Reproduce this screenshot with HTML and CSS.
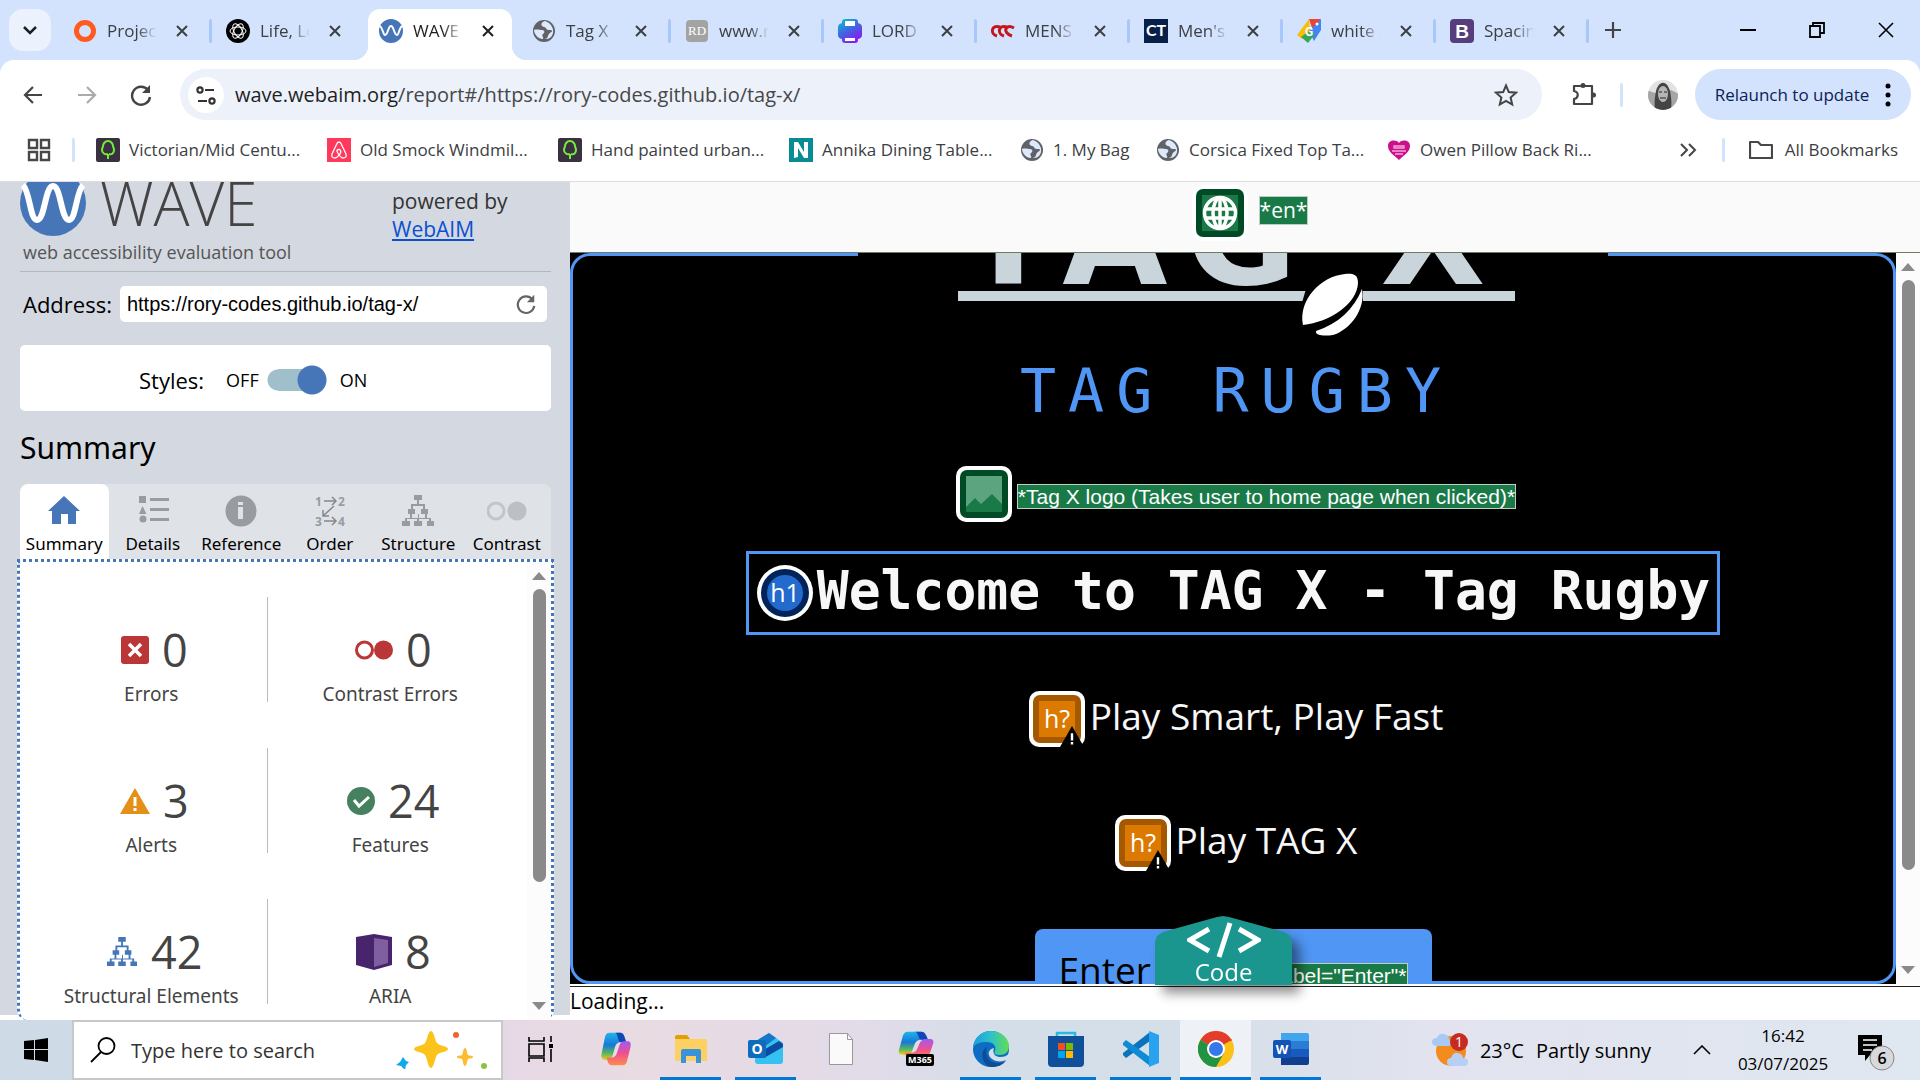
FILE: index.html
```
<!DOCTYPE html>
<html lang="en">
<head>
<meta charset="utf-8">
<title>WAVE Report</title>
<link rel="stylesheet" href="styles.css">
</head>
<body>
<svg class="defs" aria-hidden="true">
  <symbol id="close" viewBox="0 0 14 14"><path d="M2 2l10 10M12 2L2 12" stroke="currentColor" stroke-width="2" fill="none"/></symbol>
  <symbol id="globe" viewBox="0 0 24 24"><circle cx="12" cy="12" r="11" fill="#5f6368"/><path d="M2 11c3-1 6 0 8 0 3 0 3 3 1 4s1 3 0 5c-5 0-9-5-9-9zM13 2c-4 1-5 5-1 6 3 0 1 3 5 3s4 1 1 3-1 5-5 6c7 1 10-7 7-12-1-3-4-5-7-6z" fill="#dfe9fc"/></symbol>
  <symbol id="gumtree" viewBox="0 0 24 24"><rect width="24" height="24" rx="2" fill="#3b3040"/><path d="M12 21v-5M12 16c-3 1-6-1-6-4 0-2 1-3 1-4 0-2 2-5 5-5s5 3 5 5c0 1 1 2 1 4 0 3-2 5-5 4" fill="none" stroke="#6fee3b" stroke-width="2"/></symbol>
  <symbol id="tree" viewBox="0 0 32 32"><path d="M12 0h8v5h-3v4h6v5h3v5h-7v-5h2v-3H11v3h2v5H6v-5h3V9h6V5h-3zM8 19h2v4h6v-4h1v4h6v-4h2v4h4v3h3v5h-7v-5h2v-2H17v2h3v5h-8v-5h3v-2H5v2h3v5H0v-5h3v-3h5z"/></symbol>
  <symbol id="reload" viewBox="0 0 24 24"><path d="M19 7a9 9 0 1 0 2 7" fill="none" stroke="currentColor" stroke-width="2.4"/><path d="M21 2v8h-8z" fill="currentColor"/></symbol>
  <symbol id="warn" viewBox="0 0 30 26"><path d="M15 0l15 26H0z"/><path d="M15 9v9M15 20v3" stroke="#fff" stroke-width="3"/></symbol>
  <symbol id="copilot" viewBox="0 0 36 40"><path d="M10 1h13c3 0 4 2 5 5l2 6h-7c-3 0-5 2-6 5l-3 11c-1 3-3 5-6 5H5c-3 0-5-3-4-7L5 6c1-3 2-5 5-5z" fill="url(#cpa)"/><path d="M17 1h6c3 0 4 2 5 5l2 6h-6c-3 0-3-3-4-6-1-4-2-5-3-5z" fill="#1246b8"/><path d="M26 39H13c-3 0-4-2-5-5l-1-4h6c3 0 5-2 6-5l3-9c1-3 3-5 6-5h4c3 0 4 3 3 7l-4 16c-1 3-2 5-5 5z" fill="url(#cpb)"/></symbol>
  <linearGradient id="cpa" x2="0" y2="1"><stop stop-color="#20b5e8"/><stop offset=".45" stop-color="#1678d8"/><stop offset=".75" stop-color="#56b75d"/><stop offset="1" stop-color="#f7cc1d"/></linearGradient>
  <linearGradient id="cpb" x2="0" y2="1"><stop stop-color="#a259f0"/><stop offset=".5" stop-color="#ee4f91"/><stop offset="1" stop-color="#ff8b49"/></linearGradient>
</svg>

<header class="browser">
  <div class="tabstrip">
    <button class="tab-search" aria-label="Search tabs"><svg width="14" height="10" viewBox="0 0 14 10"><path d="M1 2l6 6 6-6" fill="none" stroke="#1f1f1f" stroke-width="2.5"/></svg></button>
    <ul class="tabs">
      <li><div class="tab"><svg viewBox="0 0 24 24"><circle cx="12" cy="12" r="8.5" fill="none" stroke="#ff5a1f" stroke-width="5"/></svg><span>Project</span><button aria-label="Close"><svg><use href="#close"/></svg></button></div></li>
      <li class="nosep"><div class="tab"><svg viewBox="0 0 24 24"><circle cx="12" cy="12" r="12"/><g fill="none" stroke="#fff" stroke-width="1"><ellipse cx="12" cy="12" rx="8" ry="4"/><ellipse cx="12" cy="12" rx="8" ry="4" transform="rotate(60 12 12)"/><ellipse cx="12" cy="12" rx="8" ry="4" transform="rotate(120 12 12)"/></g></svg><span>Life, Lo</span><button aria-label="Close"><svg><use href="#close"/></svg></button></div></li>
      <li class="nosep active"><div class="tab"><svg viewBox="0 0 24 24"><circle cx="12" cy="12" r="12" fill="#4776b8"/><path d="M1 7c3 2 3 9 5 9 3 0 3-9 6-9s3 9 6 9c2 0 2-7 5-9" fill="none" stroke="#fff" stroke-width="2"/></svg><span>WAVE R</span><button aria-label="Close"><svg><use href="#close"/></svg></button></div></li>
      <li><div class="tab"><svg><use href="#globe"/></svg><span>Tag X</span><button aria-label="Close"><svg><use href="#close"/></svg></button></div></li>
      <li><div class="tab"><svg viewBox="0 0 24 24"><rect x="1" y="1" width="22" height="22" rx="4" fill="#a3a3a3"/><text x="12" y="16" text-anchor="middle" font-family="Liberation Serif" font-size="13" fill="#fff">RD</text></svg><span>www.rd</span><button aria-label="Close"><svg><use href="#close"/></svg></button></div></li>
      <li><div class="tab"><svg viewBox="0 0 24 24"><linearGradient id="lg" x2=".6" y2="1"><stop stop-color="#05ccd0"/><stop offset=".5" stop-color="#3b6be0"/><stop offset="1" stop-color="#8a1bf0"/></linearGradient><path d="M7 0h10q3 0 3 3v1q4 1 4 4v8q0 3-4 4v1q0 3-3 3H7q-3 0-3-3v-1q-4-1-4-4V8q0-3 4-4V3q0-3 3-3z" fill="url(#lg)"/><path d="M7 2h10v5H7zM7 19h10v3H7z" fill="#fff"/></svg><span>LORD C</span><button aria-label="Close"><svg><use href="#close"/></svg></button></div></li>
      <li><div class="tab"><svg viewBox="0 0 24 24"><g fill="none" stroke="#c3171c" stroke-width="3"><path d="M9 8c-9-3-10 7-3 9M16 8c-9-3-10 7-3 9M23 9c-9-5-12 5-2 8"/></g></svg><span>MENS R</span><button aria-label="Close"><svg><use href="#close"/></svg></button></div></li>
      <li><div class="tab"><svg viewBox="0 0 24 24"><rect width="24" height="24" fill="#081f49"/><text x="12" y="17" text-anchor="middle" font-family="Lato" font-weight="700" font-size="16" fill="#fff">CT</text></svg><span>Men's T</span><button aria-label="Close"><svg><use href="#close"/></svg></button></div></li>
      <li><div class="tab"><svg viewBox="0 0 24 24"><path d="M12 0h12l-8 12z" fill="#ea4335"/><path d="M24 0v11l-7 11-5-10z" fill="#4285f4"/><path d="M12 0L0 16l5 4 8-9z" fill="#fbbc04"/><path d="M4 18l7 6 7-9-6-3z" fill="#34a853"/><circle cx="20" cy="5" r="1.5" fill="#fff"/><text x="12" y="17" text-anchor="middle" font-family="Roboto" font-weight="700" font-size="12" fill="#fff">G</text></svg><span>white p</span><button aria-label="Close"><svg><use href="#close"/></svg></button></div></li>
      <li><div class="tab"><svg viewBox="0 0 24 24"><rect width="24" height="24" rx="4" fill="#563d7c"/><text x="12" y="19" text-anchor="middle" font-family="Liberation Sans" font-weight="700" font-size="19" fill="#fff">B</text></svg><span>Spacing</span><button aria-label="Close"><svg><use href="#close"/></svg></button></div></li>
    </ul>
    <button class="new-tab" aria-label="New tab"><svg width="16" height="16" viewBox="0 0 16 16"><path d="M8 0v16M0 8h16" stroke="#444" stroke-width="2.2"/></svg></button>
    <div class="winbtns">
      <button aria-label="Minimise"><svg viewBox="0 0 16 16"><path d="M0 8h16" stroke="#000" stroke-width="2"/></svg></button>
      <button aria-label="Restore"><svg viewBox="0 0 16 16"><path d="M1 4h10v11H1zM4 4V1h11v10h-4" fill="none" stroke="#000" stroke-width="1.8"/></svg></button>
      <button aria-label="Close window"><svg viewBox="0 0 16 16"><path d="M1 1l14 14M15 1L1 15" stroke="#000" stroke-width="1.6"/></svg></button>
    </div>
  </div>

  <div class="toolbar">
    <button aria-label="Back"><svg viewBox="0 0 24 24"><path d="M21 12H4M12 4l-8 8 8 8" fill="none" stroke="#444" stroke-width="2.2"/></svg></button>
    <button aria-label="Forward"><svg viewBox="0 0 24 24"><path d="M3 12h17M12 4l8 8-8 8" fill="none" stroke="#a9abae" stroke-width="2.2"/></svg></button>
    <button class="ink" aria-label="Reload"><svg><use href="#reload"/></svg></button>
    <div class="omnibox">
      <button class="site" aria-label="Site information"><svg viewBox="0 0 24 24"><g fill="none" stroke="#333" stroke-width="2.2"><circle cx="6" cy="7" r="2.6"/><path d="M11 7h9M4 18h9"/><circle cx="18" cy="18" r="2.6"/></g></svg></button>
      <span class="url"><b>wave.webaim.org</b>/report#/https://rory-codes.github.io/tag-x/</span>
      <button aria-label="Bookmark"><svg viewBox="0 0 24 24"><path d="M12 2.500l2.800 6.600 7.200.6-5.400 4.800 1.600 7-6.200-3.700-6.200 3.700 1.600-7L2 9.700l7.200-.6z" fill="none" stroke="#444" stroke-width="2"/></svg></button>
    </div>
    <button class="ext" aria-label="Extensions"><svg viewBox="0 0 24 24"><path d="M2 3h18v18H2v-5c5-1 5-7 0-8z" fill="none" stroke="#444" stroke-width="2.200" stroke-linejoin="round"/><circle cx="11" cy="2.500" r="2.500" fill="#444"/><circle cx="21.500" cy="12" r="2.500" fill="#444"/></svg></button>
    <i class="sep"></i>
    <svg class="avatar" viewBox="0 0 32 32"><clipPath id="av"><circle cx="16" cy="16" r="15"/></clipPath><g clip-path="url(#av)"><path d="M0 0h32v32H0z" fill="#e2e2e2"/><path d="M0 11l8 3 16-3 8 4v17H0z" fill="#a5a5a5"/><path d="M8 30c-1-8 0-12 1-18 3-11 11-11 14 0 1 6 2 10 1 18l-8 3z" fill="#444"/><ellipse cx="16" cy="15" rx="5" ry="8" fill="#b5b5b5"/><path d="M12 13h3m2 0h3M13 19h6" stroke="#555" stroke-width="1.500"/></g></svg>
    <button class="relaunch">Relaunch to update <svg width="6" height="24" viewBox="0 0 6 24"><circle cx="3" cy="3" r="2.500"/><circle cx="3" cy="12" r="2.500"/><circle cx="3" cy="21" r="2.500"/></svg></button>
  </div>

  <nav class="bookmarks">
    <button class="apps" aria-label="Apps"><svg viewBox="0 0 24 24"><path d="M2 2h8v8H2zM14 2h8v8h-8zM2 14h8v8H2zM14 14h8v8h-8z" fill="none" stroke="#474747" stroke-width="2.400"/></svg></button>
    <i class="sep"></i>
    <a href="#"><svg><use href="#gumtree"/></svg><span class="long">Victorian/Mid Centu...</span></a>
    <a href="#"><svg viewBox="0 0 24 24"><path d="M0 0h24v24H0z" fill="#ff385c"/><path d="M12 4c1 0 2 1 2.500 2.500l4.500 9.500c1 3-1 4-3 4s-4-3-5.500-5.500C9 12 12 10 13.500 12.500 15 15 10 20 8 20s-4-1-3-4l4.500-9.500C10 5 11 4 12 4z" fill="none" stroke="#fff" stroke-width="1.300"/></svg><span class="long">Old Smock Windmil...</span></a>
    <a href="#"><svg><use href="#gumtree"/></svg><span class="long">Hand painted urban...</span></a>
    <a href="#"><svg viewBox="0 0 24 24"><path d="M0 0h24v24H0z" fill="#068c92"/><path d="M5 4h4l6 10V4h4v16h-4L9 10v9l-4 1z" fill="#fff"/></svg><span class="long">Annika Dining Table...</span></a>
    <a href="#"><svg><use href="#globe"/></svg><span class="short">1. My Bag</span></a>
    <a href="#"><svg><use href="#globe"/></svg><span class="long">Corsica Fixed Top Ta...</span></a>
    <a href="#"><svg viewBox="0 0 24 24"><path d="M12 22C7 17 1 14 1 8c0-6 8-7 11-3 3-4 11-3 11 3 0 6-6 9-11 14z" fill="#c9118b"/><path d="M7 8h10v2H7zM5 13h14M8 16h8" fill="none" stroke="#f3a8da" stroke-width="1.300"/></svg><span class="long">Owen Pillow Back Ri...</span></a>
    <button class="more" aria-label="More bookmarks"><svg viewBox="0 0 24 24"><path d="M5 6l6 6-6 6M13 6l6 6-6 6" fill="none" stroke="#444" stroke-width="2"/></svg></button>
    <i class="sep"></i>
    <a class="all" href="#"><svg viewBox="0 0 24 24"><path d="M1 20V4h8l3 3h11v13z" fill="none" stroke="#474747" stroke-width="2.200" stroke-linejoin="round"/></svg><span>All Bookmarks</span></a>
  </nav>
</header>

<main>
  <aside>
    <div class="brand">
      <div class="wordmark"><svg width="66" height="54" viewBox="0 13 66 54"><circle cx="33" cy="34" r="33" fill="#4776b8"/><path d="M3 16c7 7 7 35 14 35 8 0 8-34 16-34s8 34 16 34c7 0 7-28 14-35" fill="none" stroke="#fff" stroke-width="6"/></svg><span>WAVE</span></div>
      <p class="powered">powered by<br><a href="#">WebAIM</a></p>
      <p class="tagline">web accessibility evaluation tool</p>
    </div>
    <form class="address"><label for="addr">Address:</label><div class="field"><input id="addr" type="text" value="https://rory-codes.github.io/tag-x/"><button type="button" aria-label="Reload report"><svg><use href="#reload"/></svg></button></div></form>
    <div class="styles"><span class="cap">Styles:</span><label for="sw">OFF</label><input id="sw" type="checkbox" checked><label for="sw">ON</label></div>
    <h2>Summary</h2>
    <div class="views">
      <button class="on"><svg viewBox="0 0 32 32"><path d="M16 1l16 15h-4v13h-8V19h-7v10H4V16H0z" fill="#4776b8"/></svg>Summary</button>
      <button><svg viewBox="0 0 32 32"><path d="M2 1h7v7H2zM5.500 11l4 8H2zM13 3h19v3H13zM13 13h19v3H13zM13 23h19v3H13z"/><circle cx="6" cy="24" r="3.500"/></svg>Details</button>
      <button><svg viewBox="0 0 32 32"><circle cx="16" cy="16" r="15.500"/><path d="M13 12h5v12h-5zM13 7h5v3h-5z" fill="#dfe2e7"/></svg>Reference</button>
      <button><svg viewBox="0 0 32 32" class="order"><text x="1" y="11">1</text><text x="24" y="11">2</text><text x="1" y="31">3</text><text x="24" y="31">4</text><path d="M10 6h12M18 2l4 4-4 4M20 11L9 21M9 15v6h6M10 26h12M18 22l4 4-4 4" fill="none" stroke="#85898e" stroke-width="1.500"/></svg>Order</button>
      <button><svg><use href="#tree"/></svg>Structure</button>
      <button><svg viewBox="0 0 40 32" class="wide"><circle cx="9" cy="16" r="8" fill="none" stroke="#c2c6cb" stroke-width="3"/><circle cx="30" cy="16" r="9.500" fill="#bcc0c4"/></svg>Contrast</button>
    </div>
    <section class="panel">
      <div class="stats">
        <div class="stat"><p><svg viewBox="0 0 28 28" width="28"><rect width="28" height="28" rx="3" fill="#bb3636"/><path d="M8 8l12 12M20 8L8 20" stroke="#fff" stroke-width="3.500"/></svg>0</p><span>Errors</span></div>
        <div class="stat"><p><svg viewBox="0 0 38 28" width="38"><circle cx="9.500" cy="14" r="8" fill="none" stroke="#bb3636" stroke-width="3"/><circle cx="28.500" cy="14" r="9.500" fill="#bb3636"/></svg>0</p><span>Contrast Errors</span></div>
        <div class="stat"><p><svg width="30" fill="#e48f17"><use href="#warn"/></svg>3</p><span>Alerts</span></div>
        <div class="stat"><p><svg viewBox="0 0 28 28" width="28"><circle cx="14" cy="14" r="14" fill="#46815f"/><path d="M7 13l5 6 10-9" fill="none" stroke="#fff" stroke-width="3"/></svg>24</p><span>Features</span></div>
        <div class="stat"><p><svg width="32" fill="#4776b8"><use href="#tree"/></svg>42</p><span>Structural Elements</span></div>
        <div class="stat"><p><svg class="cube" viewBox="0 0 36 36" width="36"><path d="M0 3l18-3 18 3v28l-18 5-18-5z" fill="#48246d"/><path d="M18 4l14 2v23l-14 4z" fill="#805fa0"/></svg>8</p><span>ARIA</span></div>
      </div>
      <div class="scroll"><i class="up"></i><i class="thumb"></i><i class="down"></i></div>
    </section>
  </aside>

  <section class="report">
    <div class="langbar"><svg class="wicon" viewBox="0 0 56 56"><rect width="56" height="56" rx="12" fill="#fff"/><rect x="4" y="4" width="48" height="48" rx="7" fill="#004b25"/><path d="M10 10h36v36H10z" fill="#1a7a47"/><g fill="none" stroke="#fff" stroke-width="3.500"><circle cx="28" cy="28" r="15.500"/><ellipse cx="28" cy="28" rx="7" ry="15"/><path d="M28 12v32M13 24h30M13 33h30"/></g></svg><span class="tag lang">*en*</span></div>
    <div class="viewport">
      <div class="page">
        <svg class="logo" width="750" height="167" viewBox="0 0 750 167" role="img" aria-label="Tag X logo">
          <text class="mark" x="104" y="31">TAG X</text>
          <path d="M100 38h557v10H100z" fill="#cad4db"/>
          <path d="M448 36h57v17h-62z"/>
          <path d="M445 72c-5-25 18-49 42-51 9-1 13 1 13 9-1 21-28 39-55 42z" fill="#fff"/>
          <path d="M458 78c22-7 38-22 46-42 4 20-12 41-29 46-8 1-18 1-17-4z" fill="#fff"/>
          <text class="sub" x="162" y="159">TAG RUGBY</text>
        </svg>
        <div class="row alt"><svg class="wicon" viewBox="0 0 56 56"><rect width="56" height="56" rx="10" fill="#fff"/><rect x="4" y="4" width="48" height="48" rx="7" fill="#004b25"/><path d="M10 10h36v36H10z" fill="#5ca37f"/><path d="M10 41l9-9 6 6 11-10 10 10v8H10z" fill="#1a7a47"/></svg><span class="tag">*Tag X logo (Takes user to home page when clicked)*</span></div>
        <h1><svg class="wicon" viewBox="0 0 56 56"><circle cx="28" cy="28" r="28" fill="#fff"/><circle cx="28" cy="28" r="24" fill="#00235c"/><circle cx="28" cy="28" r="18" fill="#226acb"/><text x="28" y="37" text-anchor="middle">h1</text></svg><span>Welcome to TAG X - Tag Rugby</span></h1>
        <p class="row play"><svg class="wicon" viewBox="0 0 56 56"><rect width="56" height="56" rx="10" fill="#fff"/><rect x="4" y="4" width="48" height="48" rx="7" fill="#a55800"/><path d="M10 10h36v36H10z" fill="#dc7900"/><text x="28" y="37" text-anchor="middle">h?</text><svg x="31" y="35" width="24" height="21"><use href="#warn"/></svg></svg><span>Play Smart, Play Fast</span></p>
        <p class="row play"><svg class="wicon" viewBox="0 0 56 56"><rect width="56" height="56" rx="10" fill="#fff"/><rect x="4" y="4" width="48" height="48" rx="7" fill="#a55800"/><path d="M10 10h36v36H10z" fill="#dc7900"/><text x="28" y="37" text-anchor="middle">h?</text><svg x="31" y="35" width="24" height="21"><use href="#warn"/></svg></svg><span>Play TAG X</span></p>
        <button class="enter"><span>Enter</span><span class="tag">label="Enter"*</span></button>
      </div>
      <div class="scroll"><i class="up"></i><i class="thumb"></i><i class="down"></i></div>
    </div>
    <p class="loading">Loading...</p>
    <button class="code"><svg width="74" height="36" viewBox="0 0 74 36"><path d="M22 7L3 18l19 11M43 1L32 35M52 7l19 11-19 11" fill="none" stroke="#fff" stroke-width="5"/></svg><span>Code</span></button>
  </section>
</main>

<footer class="taskbar">
  <button class="start" aria-label="Start"><svg width="24" height="24" viewBox="0 0 24 24"><path d="M0 3l10-1v9H0zM11 2l13-2v11H11zM0 12h10v10l-10-1zM11 12h13v12l-13-2z"/></svg></button>
  <label class="search"><svg width="26" height="26" viewBox="0 0 26 26"><circle cx="16.500" cy="9" r="8" fill="none" stroke="#000" stroke-width="1.800"/><path d="M11 15L1 25" stroke="#000" stroke-width="1.800"/></svg><input type="text" placeholder="Type here to search" aria-label="Search">
    <svg width="92" height="38" viewBox="0 0 92 38"><path d="M35 0c3 0 4 10 6 12 2 3 11 3 11 6s-9 3-11 6c-2 2-3 13-6 13s-4-11-6-13c-2-3-11-3-11-6s9-3 11-6c2-2 3-12 6-12z" fill="#fbc31c"/><path d="M69 17c2 0 2 6 3 7s5 0 5 2-4 1-5 2-1 7-3 7-2-6-3-7-5 0-5-2 4-1 5-2 1-7 3-7z" fill="#fdbb30"/><path d="M7 26l3 4 3 1-3 3-1 5-4-4-5-1 4-3z" fill="#12a9ec"/><circle cx="60" cy="4" r="3" fill="#f2642b"/><circle cx="88" cy="35" r="3" fill="#86c440"/></svg></label>
  <div class="apps-row">
    <button aria-label="Task view"><svg width="26" height="26" viewBox="0 0 26 26"><path d="M1 1v4h15V1M1 8h15v12H1zM1 26v-4h15v4M23 0v6M23 13v13" fill="none" stroke="#000" stroke-width="1.600"/><path d="M21 8h4v4h-4z"/></svg></button>
    <button aria-label="Copilot"><svg width="36" height="34"><use href="#copilot"/></svg></button>
    <button class="run" aria-label="File Explorer"><svg width="34" height="28" viewBox="0 0 34 28"><path d="M1 8V2q0-2 2-2h10l3 4H1z" fill="#dfa000"/><path d="M1 4h30q2 0 2 2v20H1z" fill="#fdd063"/><path d="M7 28V16q0-2 2-2h16q2 0 2 2v12h-5v-7H12v7z" fill="#3a93d8"/></svg></button>
    <button class="run" aria-label="Outlook"><svg width="36" height="32" viewBox="0 0 36 32"><path d="M8 8l13-8 14 10v18q0 3-3 3H10q-3 0-3-3z" fill="#35c1f1"/><path d="M14 18L31 8l4 3v3L16 25z" fill="#0b4ba0"/><path d="M8 8l13-8 7 5-16 12z" fill="#1677c9"/><rect y="7" width="18" height="18" rx="2" fill="#0f6cbd"/><text x="9" y="21" text-anchor="middle" font-family="Open Sans" font-size="14" font-weight="700" fill="#fff">O</text></svg></button>
    <button aria-label="File"><svg width="24" height="32" viewBox="0 0 24 32"><path d="M.5.500h18l5 6v25H.5z" fill="#fafafa" stroke="#999"/><path d="M18.500.500v6h5" fill="none" stroke="#999"/></svg></button>
    <button aria-label="Microsoft 365"><svg width="36" height="36" viewBox="0 0 36 36"><svg width="36" height="29" preserveAspectRatio="none" viewBox="0 0 36 40"><use href="#copilot" width="36" height="40"/></svg><rect x="8" y="23" width="28" height="12" rx="2"/><text x="22" y="32" text-anchor="middle" font-family="Open Sans" font-size="9" font-weight="700" fill="#fff">M365</text></svg></button>
    <button class="run" aria-label="Edge"><svg width="36" height="36" viewBox="0 0 36 36"><linearGradient id="ed"><stop stop-color="#1a9de0"/><stop offset=".5" stop-color="#2dc2c8"/><stop offset="1" stop-color="#64dc50"/></linearGradient><circle cx="18" cy="18" r="18" fill="#0d6cc4"/><path d="M0 17C1 6 9 0 18 0c11 0 18 8 18 15 0 6-4 9-9 9-4 0-7-1-5-4 2-5-2-9-8-9C8 11 2 12 0 17z" fill="url(#ed)"/><path d="M14 16c-3 9 3 17 12 16 4 0 6-2 8-4-4 7-10 8-16 8C9 34 6 20 14 16z" fill="#104c94"/><path d="M21 17c-2 5 1 9 6 9 4 0 7-1 9-4v7l-3 0c-6 3-15 1-17-5-1-3 1-6 5-7z" fill="#d6e0e9"/></svg></button>
    <button class="run" aria-label="Store"><svg width="36" height="36" viewBox="0 0 36 36"><path d="M9 8V2h18v6" fill="none" stroke="#29b7ea" stroke-width="2.500"/><path d="M0 5h36v27q0 4-4 4H4q-4 0-4-4z" fill="#10509b"/><path d="M10 12h7v7h-7z" fill="#f25022"/><path d="M18 12h7v7h-7z" fill="#7fba00"/><path d="M10 20h7v7h-7z" fill="#00a4ef"/><path d="M18 20h7v7h-7z" fill="#ffb900"/></svg></button>
    <button class="run" aria-label="VS Code"><svg width="36" height="36" viewBox="0 0 36 36"><path d="M27 1v9L3 27l-3-3v-2z" fill="#0a73bb"/><path d="M27 35v-9L3 9 0 12v2z" fill="#0f8ad5"/><path d="M26 0l10 4v28l-10 4z" fill="#29a3ef"/></svg></button>
    <button class="run current" aria-label="Chrome"><svg width="36" height="36" viewBox="0 0 36 36"><circle cx="18" cy="18" r="18" fill="#fbc116"/><path d="M18 18L2.400 9A18 18 0 0 1 33.600 9z" fill="#e33b2e"/><path d="M2.400 9A18 18 0 0 0 18 36l8-14-8-4z" fill="#229342"/><path d="M18 9h15.600z" stroke="#e33b2e"/><circle cx="18" cy="18" r="9" fill="#fff"/><circle cx="18" cy="18" r="7" fill="#3478ea"/></svg></button>
    <button class="run" aria-label="Word"><svg width="36" height="32" viewBox="0 0 36 32"><path d="M8 0h26q2 0 2 2v6H8z" fill="#41a5ee"/><path d="M8 8h28v8H8z" fill="#2b7cd3"/><path d="M8 16h28v8H8z" fill="#185abd"/><path d="M8 24h28v6q0 2-2 2H8z" fill="#103f91"/><rect y="7" width="18" height="18" rx="2" fill="#1552b5"/><text x="9" y="21" text-anchor="middle" font-family="Open Sans" font-size="13" font-weight="700" fill="#fff">W</text></svg></button>
  </div>
  <div class="tray">
    <button class="weather"><svg width="38" height="34" viewBox="0 0 38 34"><circle cx="19" cy="18" r="15" fill="#f28c1c"/><path d="M5 13q-5 0-5-4t5-4q2-5 7-4t5 5q4 1 3 4t-3 3z" fill="#a9c8f3"/><path d="M19 33q-4 0-4-4t4-4q2-6 7-5t5 5q5 0 5 4t-4 4z" fill="#b5cff5"/><circle cx="27" cy="9" r="9" fill="#c62b1f"/><text x="27" y="14" text-anchor="middle" font-family="Open Sans" font-size="14" fill="#fff">1</text></svg><span>23°C</span><span>Partly sunny</span></button>
    <button class="chev" aria-label="Show hidden icons"><svg width="18" height="10" viewBox="0 0 18 10"><path d="M1 9l8-8 8 8" fill="none" stroke="#000" stroke-width="1.600"/></svg></button>
    <div class="clock"><time>16:42</time><time>03/07/2025</time></div>
    <button class="notif" aria-label="Notifications"><svg width="38" height="38" viewBox="0 0 38 38"><path d="M0 1h24v20H12l-5 6v-6H0z"/><path d="M5 6h14M5 11h14M5 16h9" stroke="#fff" stroke-width="1.500"/><circle cx="24" cy="24" r="12" fill="#d8d9dc" stroke="#888"/><text x="24" y="30" text-anchor="middle" font-family="Open Sans" font-size="16" font-weight="600">6</text></svg></button>
  </div>
</footer>
</body>
</html>
```
FILE: styles.css
```
* { box-sizing: border-box; margin: 0; padding: 0; }
body { display: flex; flex-direction: column; height: 100vh; overflow: hidden; background: #fff; color: #000; font-family: "Open Sans", sans-serif; font-size: 17px; }
button { border: 0; background: none; font: inherit; color: inherit; display: flex; align-items: center; justify-content: center; }
a { color: inherit; text-decoration: none; }
ul { list-style: none; }
svg { flex: none; display: block; }
.defs { position: absolute; width: 0; height: 0; }

/* Browser chrome */
.browser { flex: none; background: #d3e2fd; color: #3c4043; }
.tabstrip { display: flex; height: 60px; align-items: center; padding-left: 9px; }
.tab-search { width: 42px; height: 42px; border-radius: 14px; background: #ebf1fd; margin-right: 11px; }
.tabs { display: flex; align-self: stretch; align-items: flex-end; }
.tabs li { display: flex; align-items: center; width: 153px; height: 51px; }
.tabs li::after { content: ""; width: 3px; height: 24px; margin: 0 0 8px 3px; background: #a8c7fa; border-radius: 2px; }
.tabs li.nosep::after { visibility: hidden; }
.tab { display: flex; align-items: center; width: 144px; height: 51px; padding: 0 17px 8px 11px; gap: 10px; position: relative; }
.tab > svg { width: 24px; height: 24px; }
.tab span { flex: 1; overflow: hidden; white-space: nowrap; mask-image: linear-gradient(90deg, #000 60%, transparent); }
.tab button svg { width: 14px; height: 14px; }
.tab button { margin-left: 8px; }
.active .tab { background: #fff; border-radius: 12px 12px 0 0; color: #1f1f1f; }
.active .tab::before, .active .tab::after { content: ""; position: absolute; bottom: 0; width: 14px; height: 14px; }
.active .tab::before { left: -14px; background: radial-gradient(circle at 0 0, transparent 14px, #fff 14px); }
.active .tab::after { right: -14px; background: radial-gradient(circle at 100% 0, transparent 14px, #fff 14px); }
.new-tab { width: 42px; height: 42px; }
.winbtns { margin-left: auto; display: flex; }
.winbtns button { width: 69px; height: 56px; }
.winbtns svg { width: 16px; height: 16px; }
.toolbar { display: flex; align-items: center; height: 60px; padding: 9px 9px 0 21px; gap: 30px; background: #fff; border-radius: 14px 14px 0 0; }
.toolbar > button svg { width: 24px; height: 24px; }
.ink { color: #444; }
.omnibox { flex: 1; display: flex; align-items: center; height: 51px; margin-left: -3px; padding: 0 24px 0 8px; border-radius: 26px; background: #ecf1fa; }
.site { width: 36px; height: 36px; border-radius: 50%; background: #fff; margin-right: 11px; }
.omnibox svg { width: 24px; height: 24px; }
.url { flex: 1; font-size: 20px; color: #474747; }
.url b { font-weight: 400; color: #1f1f1f; }
.sep { width: 3px; height: 24px; border-radius: 2px; background: #d3e2fd; }
.toolbar .sep { margin: 0 -6px; }
.avatar { width: 32px; height: 32px; margin-right: -14px; }
.toolbar .relaunch { width: 216px; height: 51px; border-radius: 26px; background: #d3e2fd; color: #0b2257; gap: 16px; }
.toolbar .relaunch svg { width: 6px; }
.bookmarks { display: flex; align-items: center; height: 62px; padding: 0 22px 2px 27px; background: #fff; border-bottom: 1px solid #ddd; }
.bookmarks svg { width: 24px; height: 24px; }
.bookmarks a { display: flex; align-items: center; gap: 9px; margin-left: 24px; white-space: nowrap; }
.bookmarks .long { width: 174px; }
.bookmarks .short { width: 79px; }
.apps + .sep { margin: 0 -3px 0 21px; }
.more { margin: 0 22px 0 auto; }
.bookmarks .all { gap: 12px; }

/* Evaluation sidebar */
main { flex: 1; min-height: 0; display: flex; }
aside { width: 570px; display: flex; flex-direction: column; padding: 0 16px 0 20px; background: linear-gradient(#d4d8e0, #d4d8e0) no-repeat 0 0 / 100% calc(100% - 5px); }
.brand { display: grid; grid-template-columns: 372px 1fr; grid-template-rows: 54px 35px; margin-right: 3px; border-bottom: 1px solid #b4b7bb; }
.wordmark { display: flex; gap: 14px; height: 54px; }
.wordmark span { font-size: 60px; font-weight: 300; line-height: 42px; color: #444; }
.powered { font-size: 21px; line-height: 28px; padding-top: 5px; color: #333; grid-row: span 2; }
.powered a { color: #0a50d0; text-decoration: underline; }
.tagline { font-size: 18px; line-height: 32px; padding-left: 3px; color: #555; grid-column: 1; grid-row: 2; }
.address { display: flex; align-items: center; height: 36px; margin: 14px 7px 23px 3px; gap: 8px; font-size: 22px; }
.field { flex: 1; height: 36px; display: flex; align-items: center; background: #fff; border-radius: 5px; padding: 0 10px 0 7px; }
.field input { flex: 1; border: 0; background: none; font: 20px "Liberation Sans", sans-serif; min-width: 0; outline: 0; }
.field button { color: #666; }
.field svg { width: 22px; height: 22px; }
.styles { display: flex; align-items: center; height: 66px; margin-right: 3px; padding: 4px 0 0 119px; background: #fff; border-radius: 5px; font-size: 18px; }
.cap { font-size: 22px; margin-right: 22px; }
.styles input { appearance: none; width: 61px; height: 32px; margin: 0 13px 0 7px; background: radial-gradient(circle at 46px 16px, #4776b8 14px, transparent 15px), linear-gradient(#9fc0ca, #9fc0ca) no-repeat 12px 5px / 30px 22px, radial-gradient(circle at 12px 16px, #9fc0ca 10px, transparent 11px); }
h2 { font-family: "Noto Sans", sans-serif; font-size: 30px; font-weight: 400; line-height: 42px; margin: 16px 0 15px; }
.views { display: grid; grid-template-columns: repeat(6, 1fr); margin-right: 3px; height: 75px; flex: none; background: #dfe2e7; border-radius: 8px 8px 0 0; font-family: "Noto Sans", sans-serif; }
.views button { flex-direction: column; justify-content: flex-start; padding-top: 11px; gap: 5px; line-height: 24px; border-radius: 8px 8px 0 0; }
.views svg { width: 32px; height: 32px; fill: #989ca1; }
.views .wide { width: 40px; }
.views .on { background: #fff; }
.order text { font: 700 12px "Open Sans"; }
.panel { flex: 1; min-height: 0; display: flex; margin: 0 0 0 -3px; border: 3px dotted #4776b8; border-bottom: 0; border-radius: 0 0 10px 10px; background: #fff; }
.stats { flex: 1; display: grid; grid-template-columns: 232fr 246fr; grid-template-rows: repeat(3, 105px); row-gap: 46px; padding: 35px 14px 0 16px; overflow: hidden; color: #444; }
.stat { display: flex; flex-direction: column; align-items: center; padding: 28px 0 0; }
.stat:nth-child(odd) { border-right: 1px solid #bbb; }
.stat p { display: flex; align-items: center; gap: 13px; font-size: 45px; line-height: 50px; padding-left: 6px; }
.stat p svg { height: 30px; }
.stat p .cube { height: 36px; }
.stat span { font-family: "Noto Sans", sans-serif; font-size: 19px; line-height: 26px; margin-top: 6px; }
.scroll { display: flex; flex-direction: column; align-items: center; width: 24px; background: #fcfcfc; padding: 10px 0; }
.up, .down { border: 7px solid transparent; border-top: 0; border-bottom: 8px solid #8a8a8a; }
.down { border-bottom: 0; border-top: 8px solid #8a8a8a; margin-top: auto; }
.thumb { width: 13px; height: 67%; border-radius: 7px; background: #8a8a8a; margin-top: 9px; }

/* Evaluated page */
.report { flex: 1; min-width: 0; display: flex; flex-direction: column; position: relative; }
.langbar { height: 71px; flex: none; display: flex; justify-content: center; gap: 11px; padding: 3px 0 0 10px; background: #fafafa; border-bottom: 1px solid #6d7a66; }
.wicon { width: 56px; height: 56px; }
.wicon text { font: 25px "Open Sans"; fill: #fff; }
.tag { background: #1a7a47; color: #fff; border: 1px solid #b8d1c3; font: 21px/23px "Liberation Sans", sans-serif; white-space: nowrap; }
.lang { font: 21px/27px "Open Sans"; align-self: flex-start; margin-top: 11px; }
.viewport { flex: 1; min-height: 0; display: flex; background: #000; }
.viewport .thumb { height: 83%; }
.page { flex: 1; display: flex; flex-direction: column; align-items: center; overflow: hidden; position: relative; color: #f7f7f7; }
.page::before { content: ""; position: absolute; inset: 0; border: 3px solid #5096f4; border-radius: 20px; }
.page > * { position: relative; }
.logo { background: #000; }
.mark { font: 700 136px "DejaVu Sans"; letter-spacing: 18px; fill: #cad4db; }
.sub { font: 60px "DejaVu Sans Mono"; letter-spacing: 12px; fill: #5096f4; }
.row { display: flex; align-items: center; gap: 5px; flex: none; padding-left: 6px; }
.alt { margin: 46px 0 29px; }
.alt .tag { margin-top: 4px; }
h1 { display: flex; align-items: center; height: 84px; flex: none; padding: 0 7px 0 8px; gap: 4px; border: 3px solid #5096f4; font: 700 53px/62px "DejaVu Sans Mono", monospace; white-space: nowrap; }
h1 span { padding-bottom: 4px; }
.play { font-size: 37px; line-height: 50px; margin-top: 56px; height: 56px; }
.play span { padding-bottom: 6px; }
.play + .play { margin-top: 68px; }
.enter { flex: none; width: 397px; height: 90px; margin-top: 58px; padding: 14px 24px 0; border-radius: 8px 8px 0 0; background: #5096f4; color: #000; justify-content: space-between; align-items: flex-start; font-size: 37px; line-height: 54px; }
.enter .tag { margin-top: 20px; }
.loading { height: 34px; flex: none; margin-top: 2px; border-top: 1px solid #222; font-size: 21px; line-height: 29px; }
.code { position: absolute; left: 50%; bottom: 35px; margin-left: -90px; width: 137px; height: 69px; padding-top: 6px; flex-direction: column; color: #fff; font-size: 24px; line-height: 27px; filter: drop-shadow(8px 8px 6px rgba(0, 0, 0, .45)); }
.code::before { content: ""; position: absolute; inset: 0; background: #1a968f; clip-path: polygon(0 26px, 2px 20px, 8px 16px, 62px 1px, 68px 0, 74px 1px, 129px 16px, 135px 20px, 137px 26px, 137px 100%, 0 100%); }
.code > * { position: relative; }

/* Taskbar */
.taskbar { flex: none; display: flex; height: 60px; background: linear-gradient(90deg, #cedbe7 0, #d3dbe6 22%, #e6d9e5 27%, #e9dbe2 33%, #e2dbe8 45%, #d3dee8 52%, #d5dfe9 62%, #e2e3ee 75%, #dfe7f0 100%); }
.start { width: 72px; }
.search { display: flex; align-items: center; width: 431px; padding: 0 13px 0 16px; background: #fff; border: 2px solid #c8c8c8; }
.search input { flex: 1; min-width: 0; border: 0; margin-left: 15px; font: 20px "Open Sans"; outline: 0; }
.search input::placeholder { color: #333; }
.apps-row { display: flex; }
.apps-row button { width: 61px; margin: 0 7px; border-bottom: 3px solid transparent; }
.apps-row .run { border-bottom-color: #0078d7; }
.apps-row .current { background: #eef1f6; width: 71px; margin: 0 2px; }
.tray { margin-left: auto; display: flex; align-items: center; }
.weather { font-size: 20px; gap: 12px; margin-right: 42px; }
.weather svg { margin-right: -2px; }
.chev { margin-right: 17px; }
.clock { display: flex; flex-direction: column; align-items: center; line-height: 28px; width: 110px; }
.notif { margin: 6px 24px 0 20px; }
```
